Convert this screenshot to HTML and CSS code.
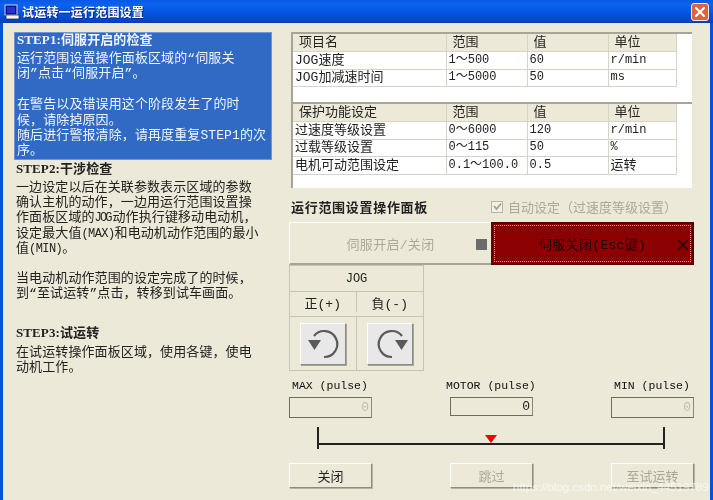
FILE: index.html
```html
<!DOCTYPE html>
<html lang="zh-CN">
<head>
  <meta charset="UTF-8">
  <title>试运转一运行范围设置</title>
  <link rel="stylesheet" href="styles.css">
</head>
<body>
  <div class="window">
    <!-- Title bar -->
    <header class="titlebar">
      <svg class="app-icon" width="16" height="16" viewBox="0 0 16 16">
        <rect x="1" y="1" width="12" height="10" fill="#10108c" stroke="#c8d4f0"/>
        <rect x="3" y="3" width="8" height="6" fill="#1c34d8"/>
        <rect x="2" y="11" width="13" height="4" fill="#f4f4f4" stroke="#222" stroke-width="0.7"/>
      </svg>
      <span class="title-text">试运转一运行范围设置</span>
      <div class="close-btn">
        <svg width="12" height="12" viewBox="0 0 12 12">
          <path d="M2 2 L10 10 M10 2 L2 10" stroke="#fff" stroke-width="2.2" stroke-linecap="round"/>
        </svg>
      </div>
    </header>

    <div class="client">
      <!-- Left help text -->
      <aside class="help">
        <section class="step step-active">
          <h2>STEP1:伺服开启的检查</h2>
          <p>运行范围设置操作面板区域的“伺服关<br>闭”点击“伺服开启”。<br><br>在警告以及错误用这个阶段发生了的时<br>候，请除掉原因。<br>随后进行警报清除，请再度重复STEP1的次<br>序。</p>
        </section>
        <section class="step step-mid">
          <h2>STEP2:干涉检查</h2>
          <p>一边设定以后在关联参数表示区域的参数<br>确认主机的动作，一边用运行范围设置操<br>作面板区域的<span class="lat tight">JOG</span>动作执行键移动电动机，<br>设定最大值<span class="lat">(MAX)</span>和电动机动作范围的最小<br>值<span class="lat">(MIN)</span>。<br><br>当电动机动作范围的设定完成了的时候，<br>到“至试运转”点击，转移到试车画面。</p>
        </section>
        <section class="step step-last">
          <h2>STEP3:试运转</h2>
          <p>在试运转操作面板区域，使用各键，使电<br>动机工作。</p>
        </section>
      </aside>

      <main class="panel">
        <!-- Parameter tables -->
        <div class="params">
          <div class="grid-box">
            <table class="grid">
              <tr class="head"><th>项目名</th><th>范围</th><th>值</th><th>单位</th></tr>
              <tr><td>JOG速度</td><td class="num">1～500</td><td class="num">60</td><td class="num">r/min</td></tr>
              <tr><td>JOG加减速时间</td><td class="num">1～5000</td><td class="num">50</td><td class="num">ms</td></tr>
            </table>
          </div>
          <div class="grid-box grid-box-2">
            <table class="grid">
              <tr class="head"><th>保护功能设定</th><th>范围</th><th>值</th><th>单位</th></tr>
              <tr><td>过速度等级设置</td><td class="num">0～6000</td><td class="num">120</td><td class="num">r/min</td></tr>
              <tr><td>过载等级设置</td><td class="num">0～115</td><td class="num">50</td><td class="num">%</td></tr>
              <tr><td>电机可动范围设定</td><td class="num">0.1～100.0</td><td class="num">0.5</td><td>运转</td></tr>
            </table>
          </div>
        </div>

        <!-- Operation panel -->
        <div class="op-head">
          <h3>运行范围设置操作面板</h3>
          <label class="auto">
            <span class="checkbox">
              <svg width="9" height="9" viewBox="0 0 9 9"><path d="M1 4 L3.5 7 L8 1.5" fill="none" stroke="#a0a098" stroke-width="1.8"/></svg>
            </span>
            自动设定（过速度等级设置）
          </label>
        </div>
        <div class="servo">
          <div class="servo-btn servo-on">
            <span>伺服开启/关闭</span>
            <i class="servo-mark"></i>
          </div>
          <div class="servo-btn servo-off">
            <span class="focus">伺服关闭(Esc键)</span>
            <svg class="servo-x" width="12" height="12" viewBox="0 0 12 12"><path d="M1 1 L11 11 M11 1 L1 11" stroke="#111" stroke-width="1.2"/></svg>
          </div>
        </div>

        <!-- JOG -->
        <div class="jog">
          <div class="jog-title">JOG</div>
          <div class="jog-row jog-labels"><div>正(+)</div><div>負(-)</div></div>
          <div class="jog-row jog-keys">
            <div>
              <button class="icon-btn">
                <svg width="44" height="41" viewBox="0 0 44 41">
                  <path d="M23 34 A13 13 0 1 0 13 13" fill="none" stroke="#5a5a5a" stroke-width="2.2"/>
                  <path d="M7 17 L20 17 L13.5 27 Z" fill="#5a5a5a"/>
                </svg>
              </button>
            </div>
            <div>
              <button class="icon-btn">
                <svg width="44" height="41" viewBox="0 0 44 41">
                  <path d="M24 34 A13 13 0 1 1 34 13" fill="none" stroke="#5a5a5a" stroke-width="2.2"/>
                  <path d="M27 17 L40 17 L33.5 27 Z" fill="#5a5a5a"/>
                </svg>
              </button>
            </div>
          </div>
        </div>

        <!-- Pulse readouts -->
        <div class="pulses">
          <div class="pulse"><label>MAX (pulse)</label><div class="field field-dim">0</div></div>
          <div class="pulse pulse-mid"><label>MOTOR (pulse)</label><div class="field field-short">0</div></div>
          <div class="pulse pulse-end"><label>MIN (pulse)</label><div class="field field-dim">0</div></div>
        </div>
        <div class="scale"><i class="pointer"></i></div>

        <!-- Bottom buttons -->
        <div class="actions">
          <button class="act">关闭</button>
          <button class="act act-dim">跳过</button>
          <button class="act act-dim">至试运转</button>
        </div>
      </main>
    </div>
  </div>
  <div class="watermark">https://blog.csdn.net/weixin_44519789</div>
</body>
</html>
```

FILE: styles.css
```css
* {
  margin: 0;
  padding: 0;
  box-sizing: border-box;
}

html, body {
  width: 713px;
  height: 500px;
  overflow: hidden;
}

body {
  font-family: "Liberation Mono", "Noto Sans CJK SC", monospace;
  font-size: 13px;
  color: #222;
  position: relative;
}

.window {
  width: 713px;
  height: 500px;
  display: flex;
  flex-direction: column;
  background: #ece9d8;
  border-left: 3px solid #0a50dc;
  border-right: 3px solid #0a50dc;
  filter: blur(0.45px);
}

/* Title bar */
.titlebar {
  height: 23px;
  margin: 0 -3px;
  padding: 0 3px 0 4px;
  display: flex;
  align-items: center;
  gap: 2px;
  flex-shrink: 0;
  background: linear-gradient(180deg, #0a58e4 0%, #0a62f0 20%, #0654e0 55%, #0448cf 85%, #0a3cae 100%);
}

.title-text {
  font-family: "Noto Sans CJK SC", sans-serif;
  font-size: 12px;
  font-weight: 700;
  letter-spacing: 0.2px;
  color: #fff;
  text-shadow: 1px 1px 0 #0a2a80;
}

.close-btn {
  margin-left: auto;
  margin-right: 1px;
  width: 18px;
  height: 18px;
  display: flex;
  align-items: center;
  justify-content: center;
  background: #e2603a;
  border: 1px solid #f4f0e8;
  border-radius: 3px;
}

.client {
  flex: 1;
  display: flex;
  min-height: 0;
}

/* Left help text */
.help {
  width: 286px;
  padding: 9px 0 0 11px;
  flex-shrink: 0;
  letter-spacing: 0.1px;
}

.lat {
  font-size: 12px;
  line-height: 1;
  letter-spacing: -0.6px;
}

.tight {
  letter-spacing: -1.9px;
  margin-right: 2px;
}

.step {
  width: 258px;
  padding: 0 2px;
  line-height: 15.4px;
}

.step h2 {
  font-family: "Liberation Serif", "Noto Sans CJK SC", serif;
  font-size: 13px;
  font-weight: 700;
  line-height: 17px;
  margin-bottom: 1px;
}

.step-active {
  height: 128px;
  background: #316ac5;
  color: #f0f4ff;
  border: 1px solid #6f96d8;
  margin-bottom: 0;
}

.step-active h2 {
  line-height: 15px;
  margin-top: -1px;
  margin-bottom: 4px;
}

.step-mid {
  line-height: 15.2px;
}

.step-mid h2 {
  margin-bottom: 3px;
}

.step-last {
  margin-top: 22px;
}

.step-last h2 {
  margin-bottom: 4px;
}

/* Right panel */
.panel {
  width: 405px;
  padding-top: 9px;
  display: flex;
  flex-direction: column;
  flex-shrink: 0;
}

.params {
  margin: 0 0 0 2px;
  width: 401px;
  height: 156px;
  background: #fff;
}

.grid-box {
  height: 70px;
  border-top: 2px solid #a8a498;
  border-left: 2px solid #a8a498;
}

.grid-box-2 {
  height: 86px;
}

.grid {
  border-collapse: collapse;
  table-layout: fixed;
  width: 384px;
  font-family: "Liberation Mono", "Noto Sans CJK SC", monospace;
}

.grid th:nth-child(1), .grid td:nth-child(1) { width: 153px; }
.grid th:nth-child(2), .grid td:nth-child(2) { width: 81px; }
.grid th:nth-child(3), .grid td:nth-child(3) { width: 81px; }

.grid th, .grid td {
  height: 17.5px;
  padding: 0 0 0 2px;
  border-right: 1px solid #d8d4c4;
  border-bottom: 1px solid #d8d4c4;
  text-align: left;
  font-weight: 400;
  line-height: 15px;
  white-space: nowrap;
}

.grid .head th {
  background: #ece9d8;
  padding-left: 6px;
}

.grid .num {
  font-size: 12px;
}

/* Operation panel */
.op-head {
  height: 34px;
  display: flex;
  align-items: flex-start;
  padding-top: 9px;
}

.op-head h3 {
  width: 202px;
  font-family: "Noto Sans CJK SC", sans-serif;
  font-size: 13px;
  font-weight: 700;
  letter-spacing: 0.7px;
  padding-left: 2px;
}

.auto {
  display: flex;
  align-items: center;
  gap: 5px;
  color: #aca899;
  font-family: "Noto Sans CJK SC", sans-serif;
  font-size: 13px;
}

.checkbox {
  width: 12px;
  height: 12px;
  display: flex;
  align-items: center;
  justify-content: center;
  background: #f4f2e8;
  border: 1px solid #b8b4a4;
}

.servo {
  display: flex;
  height: 43px;
}

.servo-btn {
  position: relative;
  width: 202px;
  display: flex;
  align-items: center;
  justify-content: center;
  letter-spacing: 0.3px;
}

.servo-on {
  color: #aca899;
  background: #ece9d8;
  border-top: 1px solid #fff;
  border-left: 1px solid #fff;
  border-bottom: 2px solid #a8a498;
}

.servo-mark {
  position: absolute;
  right: 4px;
  top: 16px;
  width: 11px;
  height: 11px;
  background: #6c6c6c;
}

.servo-off {
  width: 203px;
  background: #8b0000;
  color: #1a0000;
  border: 2px solid #5a0000;
  outline: none;
}

.servo-off::before {
  content: '';
  position: absolute;
  inset: 1px;
  border: 1px dotted #b8a8a0;
}

.servo-x {
  position: absolute;
  right: 3px;
  top: 15px;
}

/* JOG */
.jog {
  width: 135px;
  border: 1px solid #c8c4b4;
  font-size: 12px;
  text-align: center;
  flex-shrink: 0;
}

.jog-title {
  height: 26px;
  line-height: 26px;
  border-bottom: 1px solid #c8c4b4;
}

.jog-row {
  display: flex;
}

.jog-row > div {
  width: 67px;
  display: flex;
  align-items: center;
  justify-content: center;
}

.jog-row > div:first-child {
  border-right: 1px solid #c8c4b4;
}

.jog-labels {
  height: 25px;
  border-bottom: 1px solid #c8c4b4;
  font-size: 13px;
  padding-bottom: 4px;
}

.jog-keys {
  height: 53px;
}

.icon-btn {
  width: 46px;
  height: 42px;
  background: #e8e8e8;
  border: 1px solid;
  border-color: #fff #8e8c80 #8e8c80 #fff;
  box-shadow: 1px 1px 0 #a8a498;
  display: flex;
  align-items: center;
  justify-content: center;
}

/* Pulse readouts */
.pulses {
  display: flex;
  justify-content: space-between;
  margin-top: 8px;
}

.pulse {
  width: 83px;
  font-size: 13px;
}

.pulse label {
  display: block;
  height: 18px;
  line-height: 14px;
  font-size: 11.5px;
  padding-left: 3px;
  font-weight: 400;
  color: #111;
  white-space: nowrap;
}

.pulse-mid label {
  margin-left: -4px;
  padding: 0;
}

.field {
  height: 21px;
  line-height: 19px;
  text-align: right;
  padding-right: 2px;
  border: 1px solid #6e6c60;
  border-right-color: #8a887c;
  background: #ece9d8;
}

.field-short {
  height: 19px;
  line-height: 17px;
}

.field-dim {
  color: #c0bdb0;
}

.scale {
  position: relative;
  width: 348px;
  height: 22px;
  margin: 9px 0 0 28px;
  border-left: 2px solid #222;
  border-right: 2px solid #222;
  flex-shrink: 0;
}

.scale::after {
  content: '';
  position: absolute;
  left: 0;
  right: 0;
  bottom: 4px;
  height: 2px;
  background: #222;
}

.pointer {
  position: absolute;
  left: 166px;
  top: 8px;
  width: 0;
  height: 0;
  border-left: 6.5px solid transparent;
  border-right: 6.5px solid transparent;
  border-top: 8px solid #f00000;
}

/* Bottom buttons */
.actions {
  display: flex;
  justify-content: space-between;
  margin-top: 14px;
}

.act {
  width: 83px;
  height: 25px;
  font-family: "Noto Sans CJK SC", sans-serif;
  font-size: 13px;
  color: #222;
  background: #ece9d8;
  border: 1px solid;
  border-color: #fff #8e8c80 #8e8c80 #fff;
  box-shadow: 1px 1px 0 #b8b4a4;
}

.act-dim {
  color: #aca899;
}

.watermark {
  position: absolute;
  left: 513px;
  top: 481px;
  font-family: "Liberation Sans", sans-serif;
  font-size: 11.5px;
  color: rgba(255, 255, 255, 0.7);
  white-space: nowrap;
  pointer-events: none;
}
```
